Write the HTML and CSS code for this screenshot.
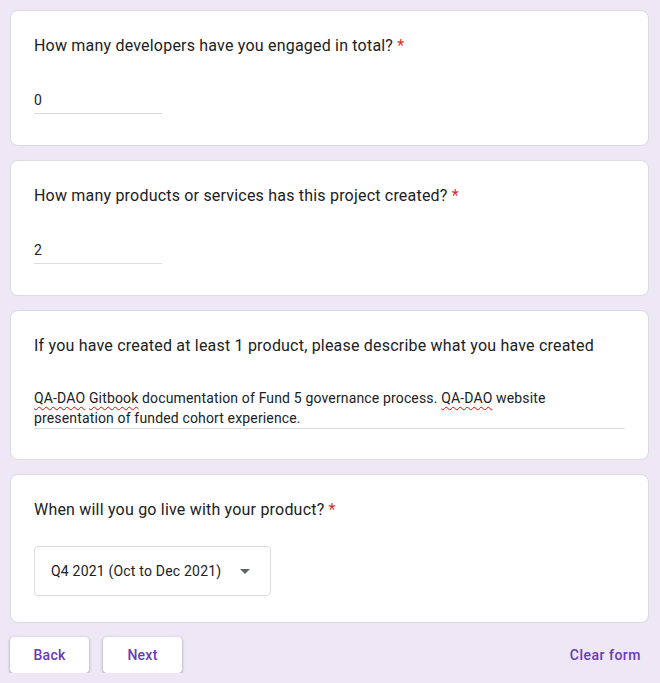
FILE: index.html
```html
<!DOCTYPE html>
<html lang="en">
<head>
<meta charset="utf-8">
<title>Form</title>
<link rel="stylesheet" href="styles.css">
</head>
<body>
<div class="form">
  <div class="card">
    <div class="question">How many developers have you engaged in total? <span class="req">*</span></div>
    <div class="input short">0</div>
  </div>
  <div class="card">
    <div class="question">How many products or services has this project created? <span class="req">*</span></div>
    <div class="input short">2</div>
  </div>
  <div class="card card-long">
    <div class="question">If you have created at least 1 product, please describe what you have created</div>
    <div class="input long"><span class="spell">QA-DAO</span> <span class="spell">Gitbook</span> documentation of Fund 5 governance process. <span class="spell">QA-DAO</span> website presentation of funded cohort experience.</div>
  </div>
  <div class="card card-select">
    <div class="question">When will you go live with your product? <span class="req">*</span></div>
    <div class="select">
      <span>Q4 2021 (Oct to Dec 2021)</span>
      <svg class="arrow" width="24" height="24" viewBox="0 0 24 24"><path d="M7 10l5 5 5-5z" fill="#5f6368"/></svg>
    </div>
  </div>
  <div class="actions">
    <div class="nav">
      <button class="btn">Back</button>
      <button class="btn">Next</button>
    </div>
    <button class="clear">Clear form</button>
  </div>
</div>
</body>
</html>
```
FILE: styles.css
```css
html, body {
  margin: 0;
  padding: 0;
  background: #ede7f6;
}
body {
  font-family: Roboto, "Liberation Sans", Arial, sans-serif;
  color: #202124;
  padding-left: 10px;
}
.form {
  width: 639px;
  padding-top: 10px;
  display: flex;
  flex-direction: column;
  gap: 14px;
}
.card {
  background: #fff;
  border: 1px solid #dadce0;
  border-radius: 8px;
  padding: 23px 23px 31px;
  height: 136px;
  box-sizing: border-box;
}
.card-long {
  height: 150px;
}
.card-select {
  height: 149px;
}
.question {
  font-size: 16px;
  line-height: 24px;
  letter-spacing: 0.2px;
}
.req {
  color: #d93025;
}
.input {
  font-size: 14px;
  line-height: 20px;
  border-bottom: 1px solid #dadce0;
}
.short {
  width: 128px;
  margin-top: 32px;
  padding-bottom: 3px;
}
.long {
  margin-top: 30px;
  padding-bottom: 0;
  letter-spacing: 0.15px;
}
.spell {
  text-decoration: underline wavy #e00;
  text-decoration-thickness: 1px;
  text-underline-offset: 3px;
}
.select {
  margin-top: 24px;
  width: 237px;
  height: 50px;
  box-sizing: border-box;
  border: 1px solid #dadce0;
  border-radius: 4px;
  padding: 0 13px 0 16px;
  display: flex;
  align-items: center;
  justify-content: space-between;
  font-size: 14px;
  letter-spacing: 0.2px;
}
.arrow {
  display: block;
}
.actions {
  display: flex;
  justify-content: space-between;
  align-items: center;
}
.nav {
  display: flex;
  gap: 14px;
}
.btn {
  font-family: Roboto, "Liberation Sans", Arial, sans-serif;
  font-size: 14px;
  font-weight: 500;
  letter-spacing: 0.25px;
  color: #673ab7;
  background: #fff;
  border: none;
  border-radius: 4px;
  height: 36px;
  width: 79px;
  box-shadow: 0 1px 2px rgba(60, 64, 67, 0.3), 0 1px 3px 1px rgba(60, 64, 67, 0.15);
  cursor: pointer;
}
.clear {
  font-family: Roboto, "Liberation Sans", Arial, sans-serif;
  font-size: 14px;
  font-weight: 500;
  letter-spacing: 0.5px;
  color: #673ab7;
  background: transparent;
  border: none;
  height: 36px;
  padding: 0 8px;
  cursor: pointer;
}
```
